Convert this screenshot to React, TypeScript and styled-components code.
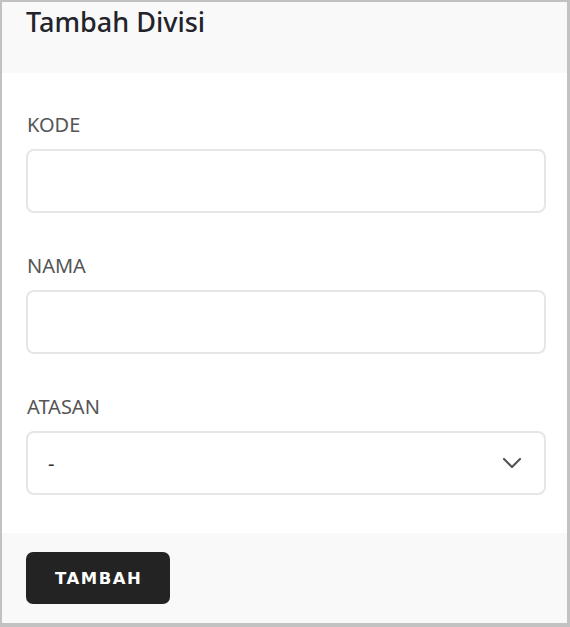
import React from "react";
import styled, { createGlobalStyle } from "styled-components";

const Global = createGlobalStyle`
  html, body { margin: 0; padding: 0; background: #c2c2c2; }
  * { box-sizing: border-box; }
  body { font-family: "Noto Sans", "Open Sans", sans-serif; }
`;

const Page = styled.div`
  height: 627px;
  padding: 2px 3px 4px 2px;
`;

const Card = styled.div`
  height: 100%;
  background: #ffffff;
  display: flex;
  flex-direction: column;
`;

const Header = styled.div`
  height: 71px;
  background: #f9f9f9;
  padding: 2px 24px 0;
`;

const Title = styled.h1`
  margin: 0;
  font-size: 27px;
  line-height: 36px;
  font-weight: 500;
  color: #23232b;
`;

const Body = styled.div`
  flex: 1;
  padding: 40px 21px 0 24px;
  display: flex;
  flex-direction: column;
  gap: 41px;
`;

const Field = styled.div`
  display: flex;
  flex-direction: column;
  gap: 12px;
`;

const Label = styled.label`
  font-size: 20px;
  line-height: 24px;
  color: #555;
  padding-left: 1px;
`;

const Input = styled.input`
  height: 64px;
  width: 100%;
  border: 2px solid #e6e6e6;
  border-radius: 8px;
  background: #fff;
  padding: 0 20px;
  font-family: inherit;
  font-size: 20px;
  outline: none;
`;

const SelectBox = styled.div`
  height: 64px;
  border: 2px solid #e6e6e6;
  border-radius: 8px;
  background: #fff;
  padding: 0 22px 0 20px;
  display: flex;
  align-items: center;
  justify-content: space-between;
  font-size: 20px;
  color: #333;
`;

const Footer = styled.div`
  height: 90px;
  background: #f9f9f9;
  padding: 19px 24px 0;
`;

const Button = styled.button`
  width: 144px;
  height: 52px;
  border: none;
  border-radius: 7px;
  background: #232323;
  color: #fff;
  font-family: "DejaVu Sans", sans-serif;
  font-weight: 700;
  font-size: 16.5px;
  letter-spacing: 1.5px;
  padding: 0 0 0 1.5px;
`;

export default function App() {
  return (
    <>
      <Global />
      <Page>
        <Card>
          <Header>
            <Title>Tambah Divisi</Title>
          </Header>
          <Body>
            <Field>
              <Label>KODE</Label>
              <Input />
            </Field>
            <Field>
              <Label>NAMA</Label>
              <Input />
            </Field>
            <Field>
              <Label>ATASAN</Label>
              <SelectBox>
                <span>-</span>
                <svg width="20" height="12" viewBox="0 0 20 12">
                  <path d="M2 2 L10 10 L18 2" fill="none" stroke="#555" strokeWidth="2.2" strokeLinecap="round" strokeLinejoin="round" />
                </svg>
              </SelectBox>
            </Field>
          </Body>
          <Footer>
            <Button>TAMBAH</Button>
          </Footer>
        </Card>
      </Page>
    </>
  );
}
